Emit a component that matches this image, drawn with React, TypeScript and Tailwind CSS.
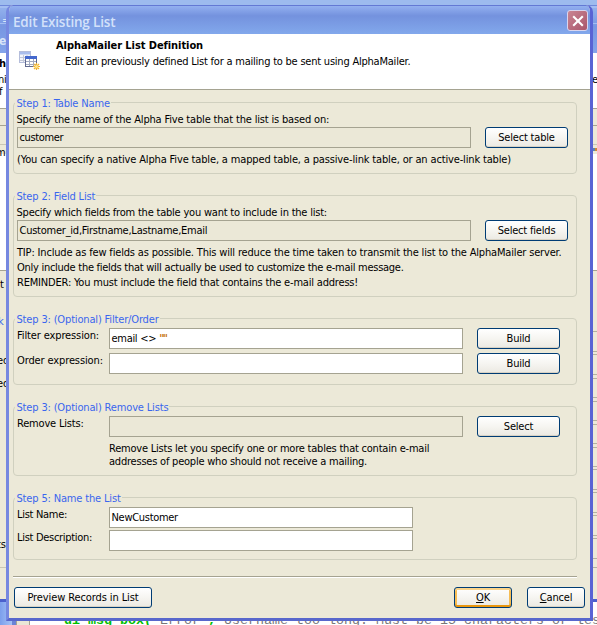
import type { ReactNode } from "react";

function Group({ title, className = "", children }: { title: string; className?: string; children: ReactNode }) {
  return (
    <section className={`flex w-[564px] flex-col items-start rounded-[4px] border border-[#d0d0bf] ${className}`}>
      <h2 className="-mt-[6px] ml-px h-[14px] bg-[#ece9d8] pr-[1px] pl-[1.5px] leading-[14px] tracking-[-0.16px] text-[#3a66ee]">{title}</h2>
      {children}
    </section>
  );
}

function Field({ value = "", readOnly = false, className }: { value?: ReactNode; readOnly?: boolean; className: string }) {
  return (
    <div className={`flex h-[21px] shrink-0 items-center border border-[#a5a391] pt-px pl-[1.5px] ${readOnly ? "bg-[#ebe8d7]" : "bg-white"} ${className}`}>
      {value}
    </div>
  );
}

function Button({ children, className = "w-[83px]", primary = false }: { children: ReactNode; className?: string; primary?: boolean }) {
  return (
    <button
      className={`flex h-[21px] shrink-0 items-center justify-center rounded-[3px] border border-[#003c74] bg-linear-to-b from-white via-[#f6f5f1] to-[#ebe9e2] pt-px leading-[14px] ${primary ? "shadow-[inset_0_2px_0_#fbd48a,inset_0_-2px_0_#e8960f,inset_2px_0_0_#f6bd55,inset_-2px_0_0_#f6bd55]" : "shadow-[inset_0_-1px_0_#d8d2c4]"} ${className}`}
    >
      {children}
    </button>
  );
}

function TablesIcon() {
  return (
    <svg className="h-[20px] w-[22px]" viewBox="0 0 22 20">
      <rect x="0.5" y="0.5" width="11" height="11" fill="#f3f5fb" stroke="#b4bddb" />
      <path d="M1 1h10v2.500H1z" fill="#a9bdec" />
      <path d="M1 6.500h10M1 9.500h10M4.500 4v7M8 4v7" stroke="#c3c8d8" fill="none" />
      <rect x="6.500" y="5.500" width="11" height="10" fill="#fff" stroke="#60698f" />
      <path d="M6 5h12v3H6z" fill="#4468cd" />
      <path d="M7 10.500h10M7 13.500h10M10.500 8v7M14.500 8v7" stroke="#a3abc2" fill="none" />
      <path d="M17.500 12v7M14 15.500h7M15 13l5 5M20 13l-5 5" stroke="#f3b32e" strokeWidth="1.200" fill="none" />
      <circle cx="17.500" cy="15.500" r="1.500" fill="#ffe48a" />
    </svg>
  );
}

const rightRows = [331, 351, 354, 374, 378, 397, 401, 420, 424, 443, 447, 466, 469, 489, 492, 512, 515, 535, 538, 558, 567];

/* The wizard window partly visible behind the dialog. */
function RearWindows() {
  return (
    <>
      <div className="absolute inset-0 bg-white" />
      <div className="absolute top-0 left-0 h-[53px] w-full bg-linear-to-b from-[#9ebcf0] via-[#7796e2] to-[#84a4ea]" />
      <div className="absolute top-0 left-0 h-[5px] w-full bg-[#9dbbee]" />
      <div className="absolute top-[5px] left-0 h-px w-full bg-[#6f88da]" />
      <div className="absolute top-[6px] left-0 h-[2px] w-full bg-[#a3bdf2]" />
      <div className="absolute top-[23px] left-0 h-px w-full bg-[#a3bdf2]" />
      <div className="absolute top-[108px] left-0 h-[46px] w-full border-t border-[#a5a391] bg-[#ece9d8]" />
      <div className="absolute top-[125px] left-0 h-px w-full bg-[#a5a391]" />
      <div className="absolute top-[144px] left-0 h-px w-full bg-[#c9c6b5]" />
      <div className="absolute top-[148px] left-[593px] h-[3px] w-[2px] bg-[#5f86b0]" />
      <div className="absolute top-[148px] left-[595px] h-[3px] w-[2px] bg-[#d08a38]" />
      <div className="absolute top-[270px] left-0 h-[332px] w-full border-t border-b-[3px] border-t-[#a5a391] border-b-[#4b60cc] bg-[#ece9d8]" />
      {rightRows.map((y) => (
        <div key={y} className="absolute left-[593px] h-px w-[4px] bg-[#b3b1a0]" style={{ top: y }} />
      ))}
      <div className="absolute top-[567px] left-0 h-px w-[6px] bg-[#c9c6b5]" />
      <div className="absolute top-[602px] left-0 h-[23px] w-[12px] bg-linear-to-r from-[#7c9fec] to-[#a5c2f5]" />
      <div className="absolute top-[602px] left-[12px] h-[23px] w-[4px] bg-[#6a83d6]" />
      <div className="absolute top-[602px] left-[16px] h-[23px] w-[14px] border-x border-[#a5a391] bg-[#e9e6d6]" />

      <span className="absolute top-[14px] left-[2px] text-[#d8e4f8]">=</span>
      <span className="absolute top-[34px] -left-px text-[12px] font-semibold text-[#d8e4f8]">e</span>
      <span className="absolute top-[57px] -left-[1px] font-bold">h</span>
      <span className="absolute top-[73px] -left-[2px]">ni</span>
      <span className="absolute top-[85px] -left-[1px]">f</span>
      <span className="absolute top-[146px] -left-[4px]">m</span>
      <span className="absolute top-[278px] left-0">t</span>
      <span className="absolute top-[315px] -left-[2px] text-[#3a66ee]">k</span>
      <span className="absolute top-[354px] -left-[3px]">ed</span>
      <span className="absolute top-[377px] -left-[3px]">ed</span>
      <span className="absolute top-[538px] -left-[3px]">ts</span>
      <span className="absolute top-[73px] left-[592px]">e</span>
      <span className="absolute top-[613px] left-[64px] font-['Liberation_Mono',monospace] text-[13.33px] leading-[16px] tracking-normal whitespace-pre text-[#777]">
        <b className="text-[#00c000]">ui_msg_box(</b>"Error"<b className="text-[#00c000]">,</b>"Username too long. Must be 15 characters or less
      </span>
    </>
  );
}

export default function App() {
  return (
    <div className="relative h-[625px] w-[597px] overflow-hidden font-['DejaVu_Sans_Condensed','DejaVu_Sans',sans-serif] text-[11px] leading-[14px] font-normal tracking-[-0.19px] whitespace-nowrap text-black [font-stretch:condensed]">
      <RearWindows />

      <main className="absolute top-[5px] left-[6px] flex h-[616px] w-[587px] flex-col overflow-hidden rounded-t-[7px] border-x-[3px] border-b-[3px] border-[#7688e0] border-r-[#5963d4] border-b-[#5867cc] bg-[#ece9d8]">
        <header className="-mx-[3px] flex h-[29px] shrink-0 items-center justify-between rounded-t-[7px] border-t border-[#6379d4] bg-linear-to-b from-[#93b0f0] via-[#7492de] via-35% to-[#82a8ec] pr-[5px] pl-[7px]">
          <h1 className="pt-[3px] font-['Open_Sans',sans-serif] text-[13.5px] leading-[16px] font-semibold tracking-[-0.18px] text-[#d3e1fa] [font-stretch:normal]">Edit Existing List</h1>
          <button className="mt-px flex h-[21px] w-[21px] items-center justify-center rounded-[3px] border border-[#d9d5ee] bg-linear-to-br from-[#c98593] to-[#a9566c]">
            <svg className="h-[12px] w-[12px]" viewBox="0 0 12 12">
              <path d="M1.2 1.2l9.6 9.6M10.8 1.2l-9.6 9.6" stroke="#fff" strokeWidth="2.1" />
            </svg>
          </button>
        </header>

        <div className="flex h-[56px] shrink-0 border-b border-[#a5a391] bg-white pt-[5px] pl-[10px]">
          <div className="mt-[12px] w-[37px]">
            <TablesIcon />
          </div>
          <div>
            <p className="font-bold tracking-[-0.07px]">AlphaMailer List Definition</p>
            <p className="mt-[2px] pl-[9px] tracking-[-0.22px]">Edit an previously defined List for a mailing to be sent using AlphaMailer.</p>
          </div>
        </div>

        <div className="flex flex-col pl-[4px]">
          <Group title="Step 1: Table Name" className="mt-[12px] h-[72px]">
            <p className="mt-[2px] pl-[2.5px] tracking-[-0.17px]">Specify the name of the Alpha Five table that the list is based on:</p>
            <div className="ml-[3px] flex gap-[14px]">
              <Field readOnly value="customer" className="w-[454px] tracking-[-0.35px]" />
              <Button>Select table</Button>
            </div>
            <p className="mt-[5px] pl-[3px] tracking-[-0.15px]">(You can specify a native Alpha Five table, a mapped table, a passive-link table, or an active-link table)</p>
          </Group>

          <Group title="Step 2: Field List" className="mt-[21px] h-[102px]">
            <p className="mt-[2px] pl-[2.5px] tracking-[-0.21px]">Specify which fields from the table you want to include in the list:</p>
            <div className="ml-[3px] flex gap-[14px]">
              <Field readOnly value="Customer_id,Firstname,Lastname,Email" className="w-[454px] tracking-[-0.24px]" />
              <Button>Select fields</Button>
            </div>
            <div className="mt-[4px] pl-[3px] leading-[15px]">
              <p className="tracking-[-0.17px]">TIP: Include as few fields as possible. This will reduce the time taken to transmit the list to the AlphaMailer server.</p>
              <p className="tracking-[-0.27px]">Only include the fields that will actually be used to customize the e-mail message.</p>
              <p>REMINDER: You must include the field that contains the e-mail address!</p>
            </div>
          </Group>

          <Group title="Step 3: (Optional) Filter/Order" className="mt-[21px] h-[67px]">
            <div className="mt-px flex pl-[3px]">
              <span className="w-[92px] pt-px tracking-[-0.12px]">Filter expression:</span>
              <Field value={<>email &lt;&gt;<b className="ml-[3px] tracking-[-1.5px] text-[#c87820]">""</b></>} className="mr-[14px] w-[354px] tracking-[-0.3px]" />
              <Button>Build</Button>
            </div>
            <div className="mt-[4px] flex pl-[3px]">
              <span className="w-[92px] pt-px tracking-[-0.12px]">Order expression:</span>
              <Field className="mr-[14px] w-[354px]" />
              <Button>Build</Button>
            </div>
          </Group>

          <Group title="Step 3: (Optional) Remove Lists" className="mt-[21px] h-[70px]">
            <div className="mt-px flex pl-[3px]">
              <span className="w-[92px] pt-px">Remove Lists:</span>
              <Field readOnly className="mr-[14px] w-[354px]" />
              <Button>Select</Button>
            </div>
            <div className="mt-[5px] pl-[95px] leading-[13px] tracking-[-0.22px]">
              <p>Remove Lists let you specify one or more tables that contain e-mail</p>
              <p>addresses of people who should not receive a mailing.</p>
            </div>
          </Group>

          <Group title="Step 5: Name the List" className="mt-[21px] h-[63px]">
            <div className="mt-px flex pl-[3px]">
              <span className="w-[92px] pt-px tracking-[-0.3px]">List Name:</span>
              <Field value="NewCustomer" className="w-[304px] tracking-[-0.3px]" />
            </div>
            <div className="mt-[2px] flex pl-[3px]">
              <span className="w-[92px] pt-px tracking-[-0.3px]">List Description:</span>
              <Field className="w-[304px]" />
            </div>
          </Group>

          <div className="mt-[16px] h-[2px] w-[564px] border-t border-b border-t-[#a5a391] border-b-white" />

          <footer className="mt-[9px] flex pl-px">
            <Button className="w-[138px] tracking-[-0.1px]">Preview Records in List</Button>
            <Button primary className="ml-[302px] w-[58px]">
              <span><u>O</u>K</span>
            </Button>
            <Button className="ml-[15px] w-[58px]">
              <span><u>C</u>ancel</span>
            </Button>
          </footer>
        </div>
      </main>
    </div>
  );
}
